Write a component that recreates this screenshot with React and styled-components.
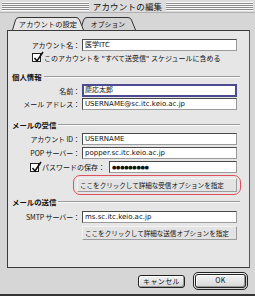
import React from "react";
import styled, { createGlobalStyle } from "styled-components";

const Global = createGlobalStyle`
  html, body { margin: 0; padding: 0; background: #d6d6d6; }
  * { box-sizing: border-box; }
`;

const jp = `"Noto Sans CJK JP", "Noto Sans", sans-serif`;

const Window = styled.div`
  width: 255px;
  height: 296px;
  background: #d6d6d6;
  font-family: ${jp};
  color: #111;
  display: flex;
  flex-direction: column;
  border-bottom: 2px solid #333;
  overflow: hidden;
`;

const TitleBar = styled.div`
  height: 13px;
  display: flex;
  align-items: center;
  padding: 0 2px;
  gap: 4px;
  background: #dcdcdc;
  border-bottom: 1px solid #b0b0b0;
`;

const Stripes = styled.div`
  flex: 1;
  height: 9px;
  background: repeating-linear-gradient(
    to bottom,
    #fafafa 0px,
    #fafafa 1px,
    #8a8a8a 1px,
    #8a8a8a 2px
  );
`;

const Title = styled.div`
  font-size: 8.5px;
  line-height: 13px;
  letter-spacing: 0.2px;
`;

const TabRow = styled.div`
  height: 17px;
  display: flex;
  align-items: flex-end;
  padding-left: 12px;
  position: relative;
`;

const Tab = styled.div`
  position: relative;
  height: 13px;
  width: ${(p) => p.w}px;
  margin-left: ${(p) => p.ml || 0}px;
  z-index: ${(p) => (p.active ? 2 : 1)};
  display: flex;
  align-items: center;
  justify-content: center;
  font-size: ${(p) => (p.active ? 7.2 : 6.8)}px;
  letter-spacing: 0.1px;
  padding-top: 1px;
  & > svg {
    position: absolute;
    left: 0;
    top: 0;
  }
  & > span {
    position: relative;
  }
`;

const Panel = styled.div`
  margin-left: 7px;
  width: 243px;
  height: 238px;
  background: #e6e6e6;
  border: 1px solid #3a3a3a;
  border-right-color: #555;
  display: flex;
  flex-direction: column;
`;

const Row = styled.div`
  display: grid;
  grid-template-columns: 72px 155px;
  column-gap: 2px;
  align-items: center;
  height: ${(p) => p.h || 12}px;
  margin-top: ${(p) => p.mt || 0}px;
`;

const Label = styled.div`
  font-size: 7px;
  text-align: right;
  white-space: nowrap;
  letter-spacing: -0.1px;
`;

const Field = styled.div`
  height: ${(p) => (p.focus ? 13 : 12)}px;
  width: ${(p) => p.w || 155}px;
  background: #fff;
  border: ${(p) => (p.focus ? "2px solid #4e4a92" : "1px solid #4a4a4a")};
  border-bottom-color: ${(p) => (p.focus ? "#4e4a92" : "#9a9a9a")};
  border-right-color: ${(p) => (p.focus ? "#4e4a92" : "#9a9a9a")};
  font-family: "DejaVu Sans", ${jp};
  font-size: ${(p) => (p.dots ? 5 : 7)}px;
  line-height: ${(p) => (p.focus ? 9 : 10)}px;
  padding-left: ${(p) => (p.focus ? 1 : 2)}px;
  white-space: nowrap;
  overflow: hidden;
  letter-spacing: ${(p) => (p.dots ? "-0.3px" : "0")};
`;

const CheckRow = styled.div`
  display: flex;
  align-items: center;
  gap: 3px;
  height: ${(p) => p.h || 11}px;
  margin-top: ${(p) => p.mt || 0}px;
  padding-left: ${(p) => p.pl}px;
  font-size: 7px;
  white-space: nowrap;
`;

const CheckLabel = styled.span`
  width: ${(p) => p.w}px;
`;

const Box = styled.div`
  position: relative;
  width: 9px;
  height: 9px;
  background: #fff;
  border: 1px solid #222;
  flex: none;
  & > svg {
    position: absolute;
    left: 0px;
    top: -3px;
  }
`;

const Header = styled.div`
  display: flex;
  align-items: center;
  gap: 2px;
  height: 10px;
  margin-top: ${(p) => p.mt || 0}px;
  padding-left: 4px;
  padding-right: 9px;
  font-size: 7.4px;
  font-weight: 700;
  &::after {
    content: "";
    flex: 1;
    height: 1px;
    background: #9a9a9a;
    box-shadow: 0 1px 0 #fafafa;
  }
`;

const Highlight = styled.div`
  margin-top: ${(p) => p.mt || 0}px;
  margin-left: 65px;
  width: 168px;
  height: 20px;
  border: 1px solid #e0505a;
  border-radius: 7px;
  display: flex;
  align-items: center;
  padding-left: 3px;
`;

const OptionButton = styled.div`
  width: ${(p) => p.w || 160}px;
  height: 14px;
  margin-top: ${(p) => p.mt || 0}px;
  margin-left: ${(p) => p.ml || 0}px;
  background: #e3e3e3;
  border: 1px solid #f4f4f4;
  border-right-color: #9c9c9c;
  border-bottom-color: #9c9c9c;
  font-size: 6.6px;
  line-height: 12px;
  padding-left: 2px;
  white-space: nowrap;
  letter-spacing: -0.05px;
`;

const Footer = styled.div`
  display: flex;
  justify-content: flex-end;
  align-items: center;
  gap: 8px;
  padding-right: 7px;
  height: 22px;
  margin-top: 2px;
`;

const PushButton = styled.div`
  width: 47px;
  height: 13px;
  border: 1px solid #222;
  border-radius: 3px;
  background: linear-gradient(#f2f2f2, #d8d8d8);
  box-shadow: inset 1px 1px 0 #fff, inset -1px -1px 0 #9a9a9a;
  font-size: 7px;
  line-height: 11px;
  text-align: center;
  letter-spacing: 0.4px;
`;

const DefaultRing = styled.div`
  width: 55px;
  height: 18px;
  border: 1px solid #222;
  border-radius: 5px;
  padding: 1px;
  background: #cfcfcf;
  box-shadow: inset 1px 1px 0 #f0f0f0;
  & > div {
    width: 100%;
    height: 14px;
  }
`;

function TabShape({ w, active }) {
  const fill = active ? "#e6e6e6" : "#d2d2d2";
  return (
    <svg width={w} height="13" viewBox={`0 0 ${w} 13`}>
      <path
        d={`M0.5 13 L3.5 3 Q4.5 0.5 7 0.5 L${w - 8} 0.5 Q${w - 5.5} 0.5 ${w - 4.5} 3 L${w - 0.5} 13`}
        fill={fill}
        stroke="#333"
        strokeWidth="1"
      />
    </svg>
  );
}

function Check() {
  return (
    <svg width="11" height="12" viewBox="0 0 11 12">
      <path d="M1.5 7 L4 10 L10 1" fill="none" stroke="#111" strokeWidth="1.6" />
    </svg>
  );
}

export default function App() {
  return (
    <Window>
      <Global />
      <TitleBar>
        <Stripes />
        <Title>アカウントの編集</Title>
        <Stripes />
      </TitleBar>
      <TabRow>
        <Tab w={72} active>
          <TabShape w={72} active />
          <span>アカウントの設定</span>
        </Tab>
        <Tab w={56} ml={-4}>
          <TabShape w={56} />
          <span>オプション</span>
        </Tab>
      </TabRow>
      <Panel>
        <Row mt={8}>
          <Label>アカウント名：</Label>
          <Field>医学ITC</Field>
        </Row>
        <CheckRow mt={1} pl={24}>
          <Box>
            <Check />
          </Box>
          <span>このアカウントを "すべて送受信" スケジュールに含める</span>
        </CheckRow>
        <Header mt={8}>個人情報</Header>
        <Row mt={3} h={13}>
          <Label>名前：</Label>
          <Field focus>慶応太郎</Field>
        </Row>
        <Row mt={1}>
          <Label>メール アドレス：</Label>
          <Field>USERNAME@sc.itc.keio.ac.jp</Field>
        </Row>
        <Header mt={9}>メールの受信</Header>
        <Row mt={4}>
          <Label>アカウント ID：</Label>
          <Field>USERNAME</Field>
        </Row>
        <Row mt={2}>
          <Label>POP サーバー：</Label>
          <Field>popper.sc.itc.keio.ac.jp</Field>
        </Row>
        <CheckRow mt={2} pl={22} h={12}>
          <Box>
            <Check />
          </Box>
          <CheckLabel w={64}>パスワードの保存：</CheckLabel>
          <Field w={128} dots>●●●●●●●●●</Field>
        </CheckRow>
        <Highlight mt={2}>
          <OptionButton>ここをクリックして詳細な受信オプションを指定</OptionButton>
        </Highlight>
        <Header mt={1}>メールの送信</Header>
        <Row mt={5}>
          <Label>SMTP サーバー：</Label>
          <Field>ms.sc.itc.keio.ac.jp</Field>
        </Row>
        <OptionButton mt={3} ml={74} w={155}>
          ここをクリックして詳細な送信オプションを指定
        </OptionButton>
      </Panel>
      <Footer>
        <PushButton>キャンセル</PushButton>
        <DefaultRing>
          <PushButton>OK</PushButton>
        </DefaultRing>
      </Footer>
    </Window>
  );
}
